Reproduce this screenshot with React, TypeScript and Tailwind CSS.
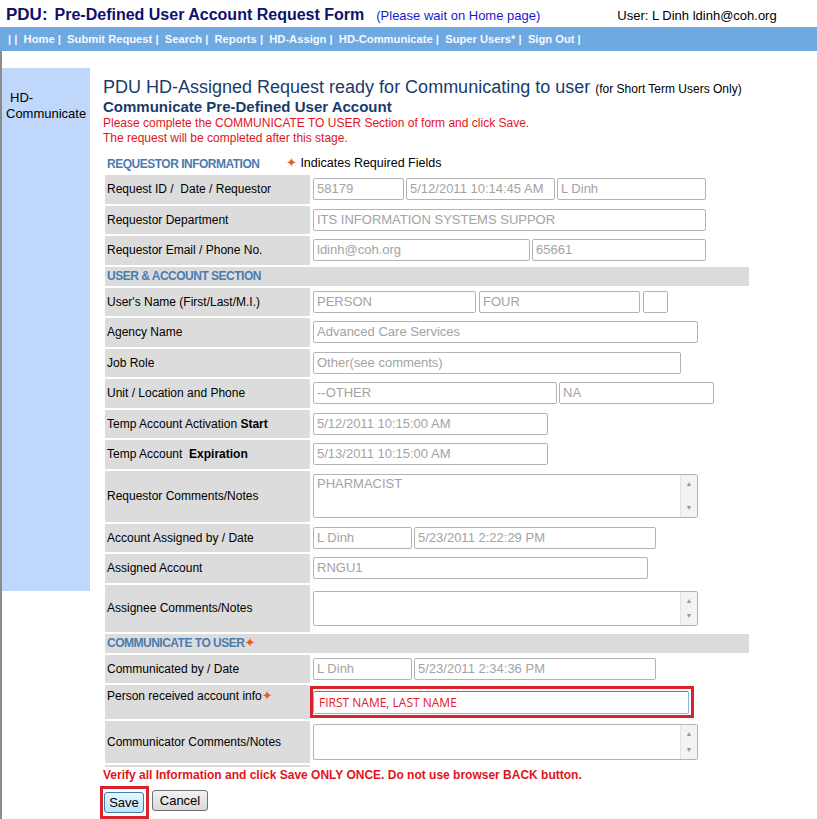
import React from 'react';

// small field box that looks like a disabled text input
const Field = ({ className, value = '' }: { className: string; value?: string }) => (
  <div
    className={`h-[22px] shrink-0 overflow-hidden whitespace-nowrap rounded-[2px] border border-[#b3b3b3] bg-white px-[3px] text-[13px] leading-[20px] text-[#a3a3a3] ${className}`}
  >
    {value}
  </div>
);

const TextArea = ({ className, value = '' }: { className: string; value?: string }) => (
  <div className={`flex w-[385px] shrink-0 rounded-[2px] border border-[#b3b3b3] bg-white ${className}`}>
    <div className="flex-1 px-[3px] pt-[1px] text-[13px] leading-[16px] text-[#a3a3a3]">{value}</div>
    <div className="flex w-[17px] flex-col items-center justify-between border-l border-[#e3e3e3] bg-[#f3f3f3] py-[5px] text-[7px] leading-[8px] text-[#9a9a9a]">
      <span>▲</span>
      <span>▼</span>
    </div>
  </div>
);

const Star = () => <span className="text-[13px] leading-[10px] text-[#ea5a22] font-['DejaVu_Sans']">✦</span>;

const Row = ({
  label,
  h = 'h-[28.5px]',
  top = false,
  children,
}: {
  label: React.ReactNode;
  h?: string;
  top?: boolean;
  children?: React.ReactNode;
}) => (
  <div className={`flex ${h}`}>
    <div
      className={`flex w-[205px] shrink-0 whitespace-pre bg-[#dcdcdc] pl-[2px] text-[12px] text-black ${top ? 'items-start pt-[2px]' : 'items-center'}`}
    >
      {label}
    </div>
    <div className="ml-[2px] flex flex-1 items-center gap-[2px] pl-[1px]">{children}</div>
  </div>
);

const Section = ({ children, shaded = true }: { children: React.ReactNode; shaded?: boolean }) => (
  <div
    className={`flex h-[19px] items-center pl-[2px] text-[12px] font-bold tracking-[-0.5px] text-[#4b7bb0] ${shaded ? 'bg-[#dcdcdc]' : ''}`}
  >
    {children}
  </div>
);

export default function App() {
  return (
    <div className="min-h-[819px] w-[817px] bg-white font-['Liberation_Sans',Arial,sans-serif] text-black">
      {/* title line */}
      <div className="flex h-[27px] items-baseline whitespace-nowrap pl-[6px] pt-[2px]">
        <span className="text-[17px] font-bold text-[#10106e]">PDU:</span>
        <span className="ml-[7px] text-[16px] font-bold text-[#10106e]">Pre-Defined User Account Request Form</span>
        <span className="ml-[12px] text-[13px] text-[#1a1acc]">(Please wait on Home page)</span>
        <span className="ml-[77px] text-[13px]">User: L Dinh ldinh@coh.org</span>
      </div>

      {/* nav */}
      <div className="flex h-[24px] items-center whitespace-pre bg-[#6fa9e2] pl-[8px] text-[11.2px] font-bold text-[#f4f8ff]">
        {'| |  Home |  Submit Request |  Search |  Reports |  HD-Assign |  HD-Communicate |  Super Users* |  Sign Out |'}
      </div>

      <div className="flex min-h-[768px] border-l-2 border-[#8c8c8c]">
        <div className="mt-[17px] h-[523px] w-[88px] shrink-0 bg-[#bed7fb] pl-[4px] pt-[22px] text-[13px] leading-[16px]">
          <div className="pl-[4px]">HD-</div>
          <div>Communicate</div>
        </div>

        <div className="ml-[13px] flex flex-col pt-[26px]">
          <div className="whitespace-nowrap text-[18px] leading-[20px] text-[#1b3b6b]">
            PDU HD-Assigned Request ready for Communicating to user{' '}
            <span className="text-[12px] text-black">(for Short Term Users Only)</span>
          </div>
          <div className="text-[15px] font-bold leading-[16px] text-[#1b3b6b]">Communicate Pre-Defined User Account</div>
          <div className="mt-[1px] text-[12px] leading-[15px] text-[#e1141c]">
            <div>Please complete the COMMUNICATE TO USER Section of form and click Save.</div>
            <div>The request will be completed after this stage.</div>
          </div>

          {/* form table */}
          <div className="ml-[2px] mt-[8px] flex w-[644px] flex-col gap-[2px]">
            <Section shaded={false}>
              <span className="w-[179px]">REQUESTOR INFORMATION</span>
              <span className="text-[12.5px] font-normal tracking-normal text-black">
                <Star /> Indicates Required Fields
              </span>
            </Section>

            <Row label="Request ID /  Date / Requestor">
              <Field className="w-[91px]" value="58179" />
              <Field className="w-[149px]" value="5/12/2011 10:14:45 AM" />
              <Field className="w-[149px]" value="L Dinh" />
            </Row>
            <Row label="Requestor Department">
              <Field className="w-[393px]" value="ITS INFORMATION SYSTEMS SUPPOR" />
            </Row>
            <Row label="Requestor Email / Phone No.">
              <Field className="w-[217px]" value="ldinh@coh.org" />
              <Field className="w-[174px]" value="65661" />
            </Row>

            <Section>USER &amp; ACCOUNT SECTION</Section>

            <Row label="User's Name (First/Last/M.I.)">
              <Field className="w-[163px]" value="PERSON" />
              <Field className="ml-[1px] w-[161px]" value="FOUR" />
              <Field className="ml-[1px] w-[25px]" />
            </Row>
            <Row label="Agency Name">
              <Field className="w-[385px]" value="Advanced Care Services" />
            </Row>
            <Row label="Job Role">
              <Field className="w-[368px]" value="Other(see comments)" />
            </Row>
            <Row label="Unit / Location and Phone">
              <Field className="w-[244px]" value="--OTHER" />
              <Field className="w-[155px]" value="NA" />
            </Row>
            <Row
              label={
                <span>
                  Temp Account Activation <b>Start</b>
                </span>
              }
            >
              <Field className="w-[235px]" value="5/12/2011 10:15:00 AM" />
            </Row>
            <Row
              label={
                <span>
                  Temp Account  <b>Expiration</b>
                </span>
              }
            >
              <Field className="w-[235px]" value="5/13/2011 10:15:00 AM" />
            </Row>
            <Row label="Requestor Comments/Notes" h="h-[51px]">
              <TextArea className="h-[44px]" value="PHARMACIST" />
            </Row>
            <Row label="Account Assigned by / Date">
              <Field className="w-[99px]" value="L Dinh" />
              <Field className="w-[242px]" value="5/23/2011 2:22:29 PM" />
            </Row>
            <Row label="Assigned Account">
              <Field className="w-[335px]" value="RNGU1" />
            </Row>
            <Row label="Assignee Comments/Notes" h="h-[47px]">
              <TextArea className="h-[35px]" />
            </Row>

            <Section>
              <span>
                COMMUNICATE TO USER
                <Star />
              </span>
            </Section>

            <Row label="Communicated by / Date">
              <Field className="w-[99px]" value="L Dinh" />
              <Field className="w-[242px]" value="5/23/2011 2:34:36 PM" />
            </Row>
            <Row
              top
              h="h-[34px]"
              label={
                <span>
                  Person received account info
                  <Star />
                </span>
              }
            >
              <div className="-ml-[3px] flex h-[32px] w-[384px] items-center border-[3px] border-[#d8222c]">
                <div className="h-[23px] w-[376px] rounded-[2px] border border-[#8fb0cf] border-t-[#5f87ad] bg-white pl-[5px] font-['Open_Sans',sans-serif] text-[12px] leading-[21px] text-[#e0202a]">
                  FIRST NAME, LAST NAME
                </div>
              </div>
            </Row>
            <Row label="Communicator Comments/Notes" h="h-[42px]">
              <TextArea className="h-[36px]" />
            </Row>
            <div className="h-[2px] w-[205px] bg-[#dcdcdc]" />
          </div>

          <div className="mt-[1px] text-[12px] font-bold leading-[15px] text-[#e1141c]">
            Verify all Information and click Save ONLY ONCE. Do not use browser BACK button.
          </div>

          <div className="mt-[3px] flex items-start">
            <div className="-ml-[3px] h-[33px] w-[49px] border-[3px] border-[#d8222c] pl-[1px] pt-[1px]">
              <button className="h-[21px] w-[40px] rounded-[3px] border border-[#3c7fb1] bg-gradient-to-b from-[#eaf6fd] to-[#bee6fd] text-[13px] leading-[19px] text-black">
                Save
              </button>
            </div>
            <button className="ml-[3px] mt-[4px] h-[21px] w-[56px] rounded-[3px] border border-[#707070] bg-gradient-to-b from-[#f2f2f2] to-[#d9d9d9] text-[13px] leading-[19px] text-black">
              Cancel
            </button>
          </div>
        </div>
      </div>
    </div>
  );
}
